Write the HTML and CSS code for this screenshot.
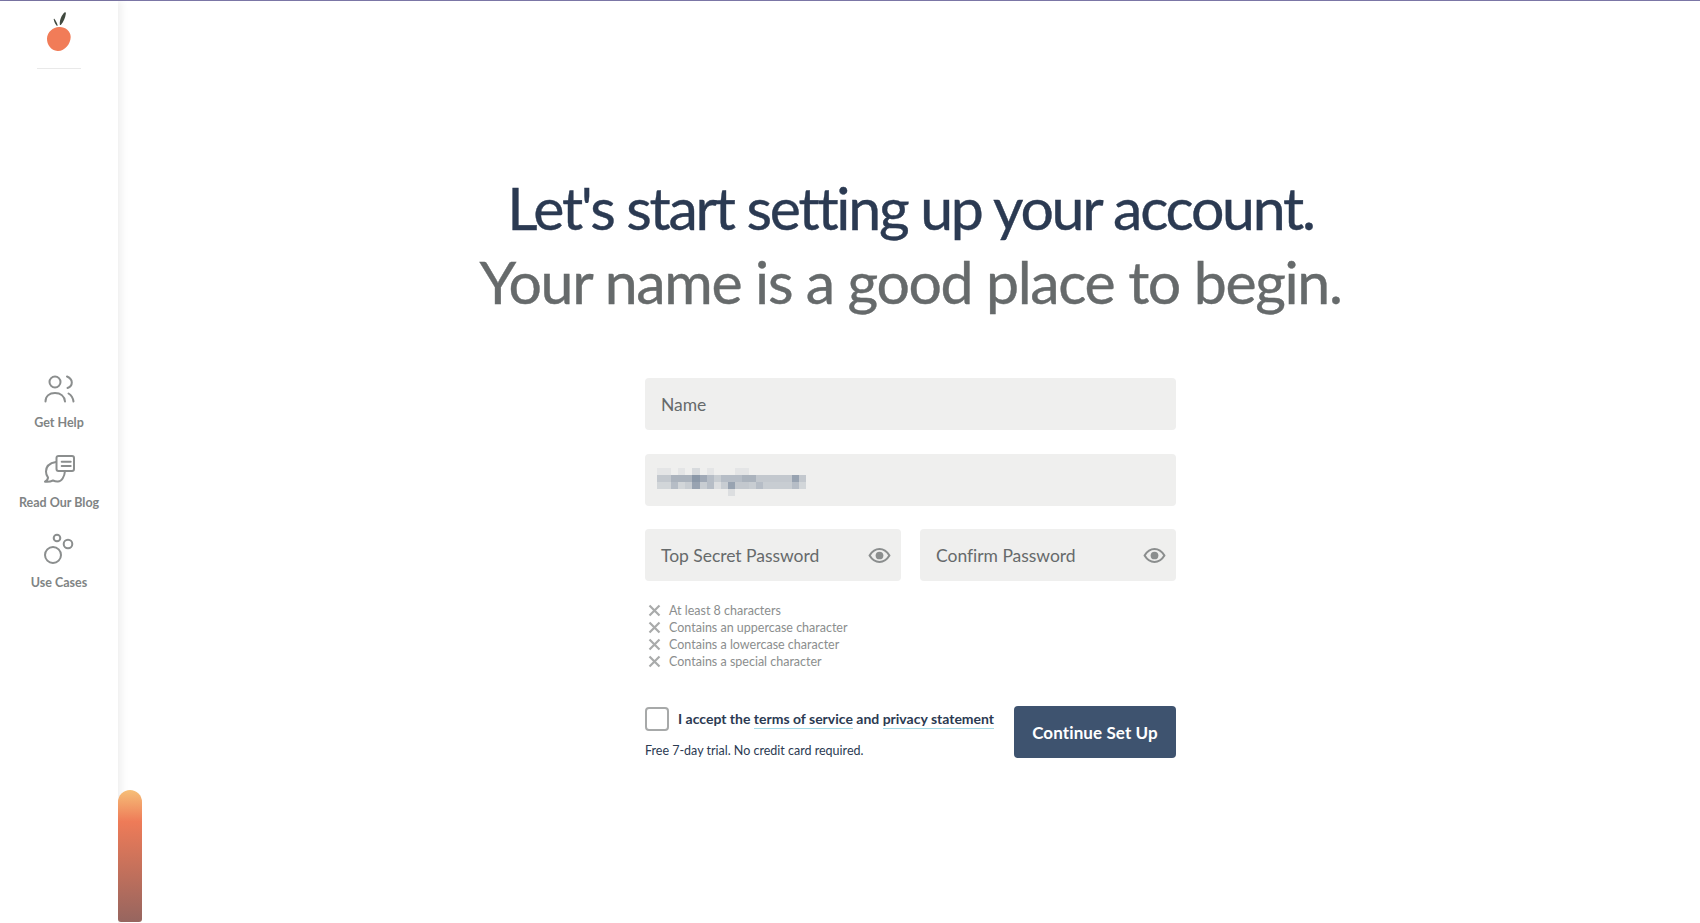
FILE: index.html
```html
<!DOCTYPE html>
<html lang="en">
<head>
<meta charset="utf-8">
<title>Set up your account</title>
<link rel="stylesheet" href="styles.css">
</head>
<body>
<div class="app">
  <aside class="sidebar">
    <div class="logo-wrap">
      <svg class="logo" width="26" height="42" viewBox="0 0 26 42">
        <path d="M13.800 12.500C13.600 8 15.500 3 18.800 0.300C20 0 20 1 19.800 2C19.200 6 17.500 10 15 12.800C14.400 13.300 13.900 13.200 13.800 12.500Z" fill="#40493f"/>
        <path d="M11.700 13.200C10.800 11 10 9.200 8.500 7C8.200 6.700 7.800 6.900 7.800 7.300C8 9.500 9 11.800 10.500 13.500C11 14 11.800 13.800 11.700 13.200Z" fill="#40493f"/>
        <path d="M13 15C18.500 14.500 24.800 18.500 24.700 25C24.600 32 18.500 39.500 11.500 39C5 38.500 0.800 32.500 1 26.500C1.300 20 7 15.300 13 15Z" fill="#f17c58"/>
      </svg>
    </div>
    <nav class="nav">
      <a class="nav-item">
        <svg width="32" height="32" viewBox="0 0 32 32" fill="none" stroke="#8b8e8e" stroke-width="2" stroke-linecap="round">
          <circle cx="12" cy="9" r="5.500"/>
          <path d="M24 3.500C27.500 5 28.800 7 28.800 9.500C28.800 12 27.500 14 24.500 15"/>
          <path d="M2.500 28.500C2.500 23 6.500 20 12 20C17.500 20 21.500 23 22 28.500"/>
          <path d="M25.500 20.500C28 22 30 25 30.500 28.500"/>
        </svg>
        <span>Get Help</span>
      </a>
      <a class="nav-item">
        <svg width="32" height="32" viewBox="0 0 32 32" fill="none" stroke="#8b8e8e" stroke-width="2" stroke-linejoin="round" stroke-linecap="round">
          <path d="M15.500 3H29C30.300 3 31 3.700 31 5V16C31 17.300 30.300 18 29 18H15.500C14.200 18 13.500 17.300 13.500 16V5C13.500 3.700 14.200 3 15.500 3Z"/>
          <path d="M18.700 8.700H27.700M18.700 13H27.700"/>
          <path d="M13 9C7 10 3 13.500 3 18.500C3 21 3.700 23 5 24.500C5 26 4 27.500 2 28.700C5 29 8 28.500 10 27.500C11.500 28.200 13 28.700 15 28.500C18.500 28.500 21.500 24 22 18"/>
        </svg>
        <span>Read Our Blog</span>
      </a>
      <a class="nav-item">
        <svg width="32" height="32" viewBox="0 0 32 32" fill="none" stroke="#8b8e8e" stroke-width="2">
          <circle cx="14" cy="5" r="3.300"/>
          <circle cx="25" cy="11" r="4.300"/>
          <circle cx="10" cy="22" r="8"/>
        </svg>
        <span>Use Cases</span>
      </a>
    </nav>
  </aside>
  <div class="tab"></div>
  <main class="main">
    <h1 class="headline"><span class="line-dark">Let's start setting up your account.</span><span class="line-grey">Your name is a good place to begin.</span></h1>
    <form class="form">
      <div class="field"><span class="label">Name</span></div>
      <div class="field">
        <svg class="blurred" width="149" height="28" viewBox="0 0 21 4" preserveAspectRatio="none" shape-rendering="crispEdges">
          <g fill="#8592a3">
            <path opacity=".1" d="M0 0h2v1H0zM3 0h1v1H3zM7 0h1v1H7zM11 0h2v1h-2z"/>
            <path opacity=".22" d="M5 0h1v1H5z"/>
            <path opacity=".18" d="M10 3h1v1h-1zM8 2h1v1H8z"/>
            <path opacity=".27" d="M0 2h2v1H0zM3 2h1v1H3zM20 2h1v1h-1z"/>
            <path opacity=".37" d="M8 1h1v1H8zM4 2h1v1H4zM6 2h1v1H6zM9 2h1v1H9zM13 2h1v1h-1zM15 2h4v1h-4z"/>
            <path opacity=".42" d="M0 1h2v1H0zM14 1h5v1h-5zM20 1h1v1h-1zM11 2h2v1h-2z"/>
            <path opacity=".53" d="M7 1h1v1H7zM9 1h3v1H9zM2 2h1v1H2zM7 2h1v1H7zM14 2h1v1h-1zM19 2h1v1h-1z"/>
            <path opacity=".65" d="M2 1h3v1H2zM12 1h2v1h-2z"/>
            <path opacity=".75" d="M6 1h1v1H6z"/>
            <path opacity=".82" d="M19 1h1v1h-1zM5 2h1v1H5zM10 2h1v1h-1z"/>
            <path opacity=".95" d="M5 1h1v1H5z"/>
          </g>
        </svg>
      </div>
      <div class="row">
        <div class="field"><span class="label">Top Secret Password</span>
          <svg class="eye" width="23" height="17" viewBox="0 0 22 16"><path d="M1.500 8C4 4 7 1.800 11 1.800S18 4 20.500 8C18 12 15 14.200 11 14.200S4 12 1.500 8Z" fill="none" stroke="#8b8e8e" stroke-width="2" stroke-linejoin="round"/><circle cx="11" cy="8" r="3.700" fill="#8b8e8e"/></svg>
        </div>
        <div class="field"><span class="label">Confirm Password</span>
          <svg class="eye" width="23" height="17" viewBox="0 0 22 16"><path d="M1.500 8C4 4 7 1.800 11 1.800S18 4 20.500 8C18 12 15 14.200 11 14.200S4 12 1.500 8Z" fill="none" stroke="#8b8e8e" stroke-width="2" stroke-linejoin="round"/><circle cx="11" cy="8" r="3.700" fill="#8b8e8e"/></svg>
        </div>
      </div>
      <ul class="rules">
        <li><svg width="13" height="13" viewBox="0 0 13 13"><path d="M1.500 1.500L11.500 11.500M11.500 1.500L1.500 11.500" stroke="#a9abab" stroke-width="2.200"/></svg>At least 8 characters</li>
        <li><svg width="13" height="13" viewBox="0 0 13 13"><path d="M1.500 1.500L11.500 11.500M11.500 1.500L1.500 11.500" stroke="#a9abab" stroke-width="2.200"/></svg>Contains an uppercase character</li>
        <li><svg width="13" height="13" viewBox="0 0 13 13"><path d="M1.500 1.500L11.500 11.500M11.500 1.500L1.500 11.500" stroke="#a9abab" stroke-width="2.200"/></svg>Contains a lowercase character</li>
        <li><svg width="13" height="13" viewBox="0 0 13 13"><path d="M1.500 1.500L11.500 11.500M11.500 1.500L1.500 11.500" stroke="#a9abab" stroke-width="2.200"/></svg>Contains a special character</li>
      </ul>
      <div class="footer">
        <div class="consent">
          <div class="accept">
            <span class="checkbox"></span>
            <span class="accept-text">I accept the <a class="link">terms of service</a> and <a class="link">privacy statement</a></span>
          </div>
          <p class="trial">Free 7-day trial. No credit card required.</p>
        </div>
        <button class="submit" type="button">Continue Set Up</button>
      </div>
    </form>
  </main>
</div>
</body>
</html>
```
FILE: styles.css
```css
* { box-sizing: border-box; }
html, body { margin: 0; height: 100%; background: #fff; }
body { font-family: Lato, "Open Sans", sans-serif; overflow: hidden; }
.app { display: flex; height: 923px; border-top: 1px solid #7b76a6; position: relative; }
.sidebar { width: 118px; flex: none; display: flex; flex-direction: column; align-items: center; box-shadow: 3px 0 8px rgba(0,0,0,.07); background: #fff; }
.logo-wrap { width: 44px; height: 68px; border-bottom: 1px solid #e9e9e9; display: flex; justify-content: center; padding-top: 11px; }
.logo { display: block; }
.nav { display: flex; flex-direction: column; margin-top: 304px; gap: 0; }
.nav-item { height: 80px; display: flex; flex-direction: column; align-items: center; color: #808484; font-size: 12.500px; font-weight: 700; gap: 10px; }
.tab { position: absolute; left: 118px; top: 789px; width: 24px; height: 132px; border-radius: 12px 12px 3px 3px; background: linear-gradient(#f6bf78 0%, #ee7b58 24%, #96655f 100%); }
.main { flex: 1; display: flex; flex-direction: column; align-items: center; padding: 170px 0 0 3px; }
.headline { margin: 0; font-size: 59px; font-weight: 400; line-height: 74px; text-align: center; display: flex; flex-direction: column; -webkit-text-stroke: .4px currentColor; }
.line-dark { color: #2b3a52; letter-spacing: -2.250px; }
.line-grey { color: #666a6b; letter-spacing: -1.350px; }
.form { width: 531px; margin-top: 59px; display: flex; flex-direction: column; gap: 23.600px; }
.field { height: 52px; background: #efefee; border-radius: 4px; display: flex; align-items: center; justify-content: space-between; padding: 0 10px 0 16px; flex: 1; }
.form > .field { flex: none; }
.label { color: #666a6b; font-size: 17.500px; letter-spacing: -.03px; }
.blurred { margin-left: -4px; margin-top: 4px; display: block; }
.row { display: flex; gap: 19px; }
.rules { list-style: none; margin: -2.500px 0 0; padding: 0; color: #8b8e8e; font-size: 12.500px; }
.rules li { height: 17px; display: flex; align-items: center; gap: 8px; padding-left: 3px; }
.footer { display: flex; justify-content: space-between; align-items: flex-start; margin-top: 12.300px; }
.consent { display: flex; flex-direction: column; padding-top: 1px; }
.accept { display: flex; align-items: center; gap: 9px; }
.checkbox { width: 24px; height: 24px; border: 2px solid #a7a9a9; border-radius: 4px; background: #fff; }
.accept-text { color: #2b3a52; font-size: 14px; font-weight: 700; position: relative; top: -1px; }
.link { border-bottom: 1px solid #a5dbe6; padding-bottom: 1px; }
.trial { margin: 12px 0 0; color: #2b3a52; font-size: 12.500px; }
.submit { width: 162px; height: 52px; background: #3e536f; color: #fff; border: 0; border-radius: 4px; font: 700 17px Lato, sans-serif; letter-spacing: .1px; padding: 0; }
```
